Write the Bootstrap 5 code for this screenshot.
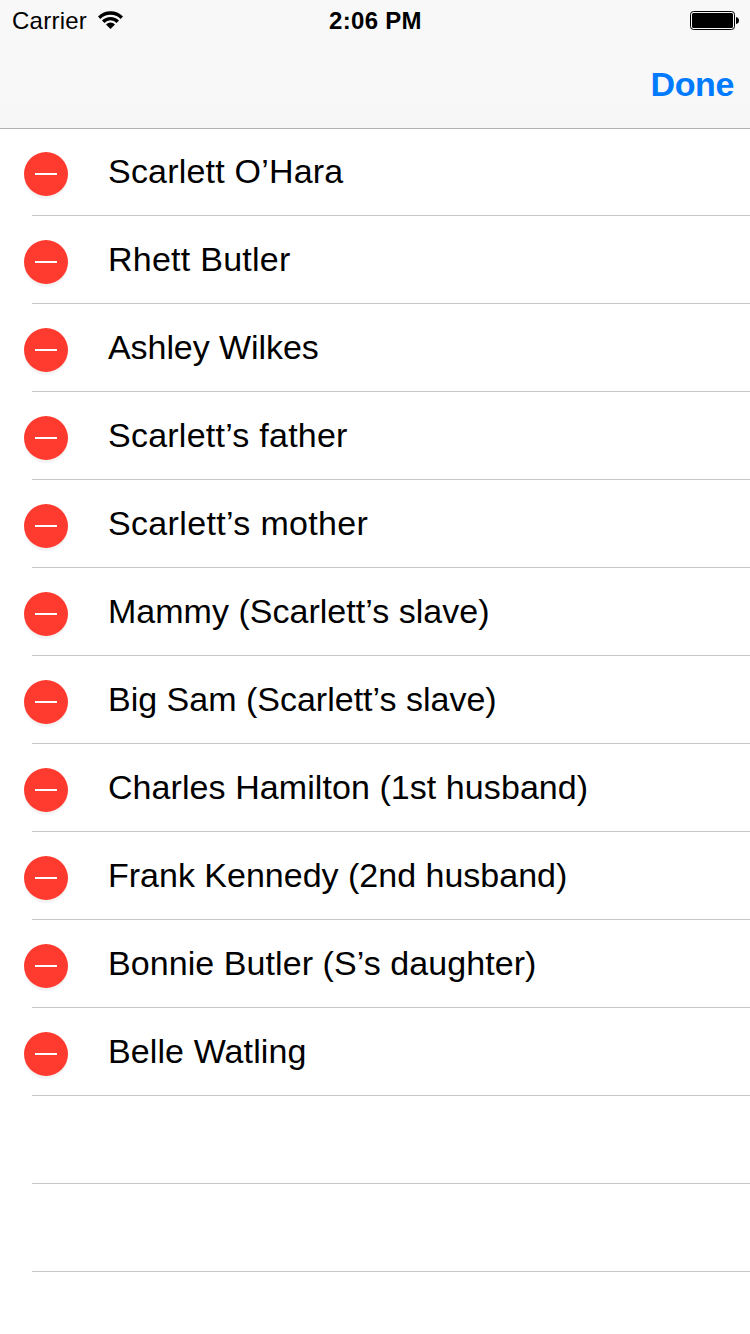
<!DOCTYPE html>
<html lang="en">
<head>
<meta charset="utf-8">
<meta name="viewport" content="width=device-width, initial-scale=1">
<title>Characters</title>
<link href="https://cdn.jsdelivr.net/npm/bootstrap@5.3.0/dist/css/bootstrap.min.css" rel="stylesheet">
<style>
body{font-family:"Liberation Sans",Arial,sans-serif;color:#000;background:#fff;height:1334px;overflow:hidden}
.topbar{height:129px;background:linear-gradient(#f8f8f8 75%,#f6f6f6);border-bottom:1px solid #b2b2b2}
.status{height:40px;font-size:24px;line-height:40px;padding:0 11px 0 12px}
.status>div{flex:1 1 0}
.carrier{letter-spacing:.25px;padding-top:2px}
.clock{letter-spacing:.3px;font-weight:700;text-align:center;padding-top:2px}
.wifi{margin:0 0 0 11px}
.battery{margin-top:1px}
.done{height:88px;color:#007aff;font-size:34px;line-height:88px;font-weight:700;letter-spacing:-.4px;padding:0 16px}
.person{height:88px;padding-left:24px}
.person .txt{font-size:34px;line-height:40px;padding-top:22px;margin-left:40px;white-space:nowrap}
.rule{height:1px;background:#c8c7cc;margin:-2px 0 1px 32px}
.del{width:44px;height:44px;margin-top:23px;border-radius:50%;background:#ff3b30;box-shadow:0 3px 1px 0 rgba(0,0,0,.05)}
.del i{width:22px;height:2px;background:#fff}
</style>
</head>
<body>
<header class="topbar">
<div class="status d-flex align-items-center">
<div class="d-flex align-items-center"><span class="carrier">Carrier</span>
<svg class="wifi" width="26" height="20" viewBox="0 0 26 20"><path d="M1.200 7.700A16 16 0 0 1 23.800 7.700M5.200 11.700A10.300 10.300 0 0 1 19.800 11.700" fill="none" stroke="#000" stroke-width="3.400"/><path d="M12.500 19L8 14.500A6.300 6.300 0 0 1 17 14.500Z"/></svg></div>
<div class="clock">2:06 PM</div>
<div class="d-flex justify-content-end"><svg class="battery" width="49" height="19" viewBox="0 0 49 19"><rect x=".5" y=".5" width="44" height="18" rx="3" fill="none" stroke="#000"/><rect x="2" y="2" width="41" height="15" rx="1.500"/><path d="M46 6Q49 6.500 49 9.500T46 13Z"/></svg></div>
</div>
<div class="done d-flex justify-content-end">Done</div>
</header>
<main id="list"></main>
<script src="https://cdn.jsdelivr.net/npm/bootstrap@5.3.0/dist/js/bootstrap.bundle.min.js"></script>
<script>
// name and letter tracking in pixels; null leaves an empty row
const people=[["Scarlett O’Hara",.2],["Rhett Butler",.25],["Ashley Wilkes",-.07],["Scarlett’s father",.24],["Scarlett’s mother",.34],["Mammy (Scarlett’s slave)",.02],["Big Sam (Scarlett’s slave)",0],["Charles Hamilton (1st husband)",.07],["Frank Kennedy (2nd husband)",0],["Bonnie Butler (S’s daughter)",.07],["Belle Watling",.1],null,null];
document.getElementById("list").innerHTML=people.map(p=>`<div class="person d-flex align-items-start">${p?`<span class="del d-flex align-items-center justify-content-center"><i></i></span><span class="txt" style="letter-spacing:${p[1]}px">${p[0]}</span>`:""}</div><div class="rule"></div>`).join("");
</script>
</body>
</html>
